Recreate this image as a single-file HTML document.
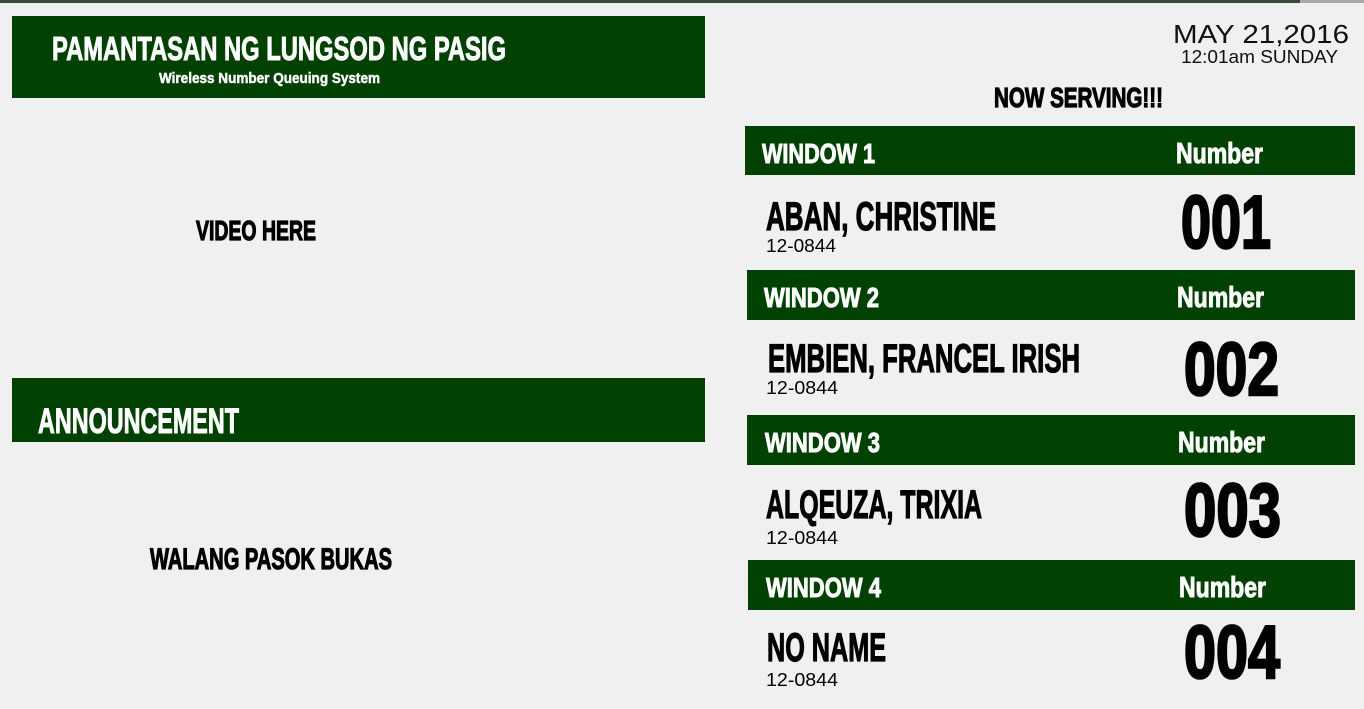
<!DOCTYPE html>
<html><head><meta charset="utf-8"><style>
html,body{margin:0;padding:0;background:#f0f0f0;width:1364px;height:709px;overflow:hidden}
svg{display:block}
.i{font-family:"Liberation Sans Narrow","Liberation Sans",sans-serif;font-weight:bold}
.w{stroke:#fff;stroke-width:1}
.b{stroke:#000;stroke-width:1.2}
.bb{stroke:#000;stroke-width:2.5}
.g{font-family:"Liberation Sans","DejaVu Sans",sans-serif}
</style></head><body>
<svg width="1364" height="709" viewBox="0 0 1364 709" xmlns="http://www.w3.org/2000/svg">
<rect width="1364" height="709" fill="#f0f0f0"/>
<rect x="0" y="0" width="1364" height="3" fill="#3a4a3a"/>
<rect x="1300" y="0" width="64" height="3" fill="#aaa"/>
<rect x="12" y="16" width="693" height="82" fill="#004000"/>
<text class="i w" x="52" y="60" font-size="33" fill="#fff" textLength="454" lengthAdjust="spacingAndGlyphs">PAMANTASAN NG LUNGSOD NG PASIG</text>
<text class="i" x="159" y="83" font-size="15" fill="#fff" stroke="#fff" stroke-width="0.5" textLength="221" lengthAdjust="spacingAndGlyphs">Wireless Number Queuing System</text>
<text class="i b" x="196" y="240" font-size="28" fill="#000" textLength="120" lengthAdjust="spacingAndGlyphs">VIDEO HERE</text>
<rect x="12" y="378" width="693" height="64" fill="#004000"/>
<text class="i w" x="38" y="433" font-size="35" fill="#fff" textLength="201" lengthAdjust="spacingAndGlyphs">ANNOUNCEMENT</text>
<text class="i b" x="150" y="569" font-size="30" fill="#000" textLength="242" lengthAdjust="spacingAndGlyphs">WALANG PASOK BUKAS</text>
<text class="g" x="1173" y="43" font-size="26" fill="#111" textLength="176" lengthAdjust="spacingAndGlyphs">MAY 21,2016</text>
<text class="g" x="1181" y="63" font-size="18" fill="#111" textLength="157" lengthAdjust="spacingAndGlyphs">12:01am SUNDAY</text>
<text class="i b" x="994" y="107" font-size="28" fill="#000" textLength="169" lengthAdjust="spacingAndGlyphs">NOW SERVING!!!</text>
<rect x="745" y="126" width="610" height="49" fill="#004000"/>
<text class="i w" x="762" y="163" font-size="28" fill="#fff" textLength="113" lengthAdjust="spacingAndGlyphs">WINDOW 1</text>
<text class="i w" x="1176" y="163" font-size="29" fill="#fff" textLength="87" lengthAdjust="spacingAndGlyphs">Number</text>
<text class="i b" x="766" y="230" font-size="40" fill="#000" textLength="230" lengthAdjust="spacingAndGlyphs">ABAN, CHRISTINE</text>
<text class="g" x="766" y="252" font-size="18" fill="#000" textLength="70" lengthAdjust="spacingAndGlyphs">12-0844</text>
<text class="i bb" x="1181" y="248" font-size="75" fill="#000" textLength="90" lengthAdjust="spacingAndGlyphs">001</text>
<rect x="747" y="270" width="608" height="50" fill="#004000"/>
<text class="i w" x="764" y="307" font-size="28" fill="#fff" textLength="115" lengthAdjust="spacingAndGlyphs">WINDOW 2</text>
<text class="i w" x="1177" y="307" font-size="29" fill="#fff" textLength="87" lengthAdjust="spacingAndGlyphs">Number</text>
<text class="i b" x="768" y="372" font-size="40" fill="#000" textLength="312" lengthAdjust="spacingAndGlyphs">EMBIEN, FRANCEL IRISH</text>
<text class="g" x="766" y="394" font-size="18" fill="#000" textLength="72" lengthAdjust="spacingAndGlyphs">12-0844</text>
<text class="i bb" x="1184" y="395" font-size="75" fill="#000" textLength="95" lengthAdjust="spacingAndGlyphs">002</text>
<rect x="747" y="415" width="608" height="50" fill="#004000"/>
<text class="i w" x="765" y="452" font-size="28" fill="#fff" textLength="115" lengthAdjust="spacingAndGlyphs">WINDOW 3</text>
<text class="i w" x="1178" y="452" font-size="29" fill="#fff" textLength="87" lengthAdjust="spacingAndGlyphs">Number</text>
<text class="i b" x="766" y="518" font-size="40" fill="#000" textLength="216" lengthAdjust="spacingAndGlyphs">ALQEUZA, TRIXIA</text>
<text class="g" x="766" y="544" font-size="18" fill="#000" textLength="72" lengthAdjust="spacingAndGlyphs">12-0844</text>
<text class="i bb" x="1184" y="536" font-size="75" fill="#000" textLength="97" lengthAdjust="spacingAndGlyphs">003</text>
<rect x="748" y="560" width="607" height="50" fill="#004000"/>
<text class="i w" x="766" y="597" font-size="28" fill="#fff" textLength="115" lengthAdjust="spacingAndGlyphs">WINDOW 4</text>
<text class="i w" x="1179" y="597" font-size="29" fill="#fff" textLength="87" lengthAdjust="spacingAndGlyphs">Number</text>
<text class="i b" x="767" y="661" font-size="40" fill="#000" textLength="119" lengthAdjust="spacingAndGlyphs">NO NAME</text>
<text class="g" x="766" y="686" font-size="18" fill="#000" textLength="72" lengthAdjust="spacingAndGlyphs">12-0844</text>
<text class="i bb" x="1184" y="678" font-size="75" fill="#000" textLength="96" lengthAdjust="spacingAndGlyphs">004</text>
</svg>
</body></html>
